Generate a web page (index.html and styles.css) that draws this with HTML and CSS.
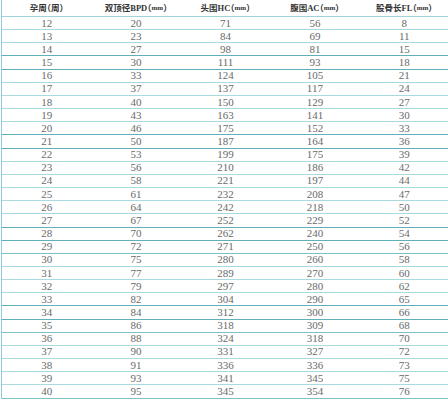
FILE: index.html
```html
<!DOCTYPE html>
<html>
<head>
<meta charset="utf-8">
<link rel="stylesheet" href="styles.css">
</head>
<body>
<div class="table">
  <div class="row head">
    <div>孕周（周）</div><div>双顶径BPD（<span class="unit">mm</span>）</div><div>头围HC（<span class="unit">mm</span>）</div><div>腹围AC（<span class="unit">mm</span>）</div><div>股骨长FL（<span class="unit">mm</span>）</div>
  </div>
  <div class="row"><div>12</div><div>20</div><div>71</div><div>56</div><div>8</div></div>
  <div class="row"><div>13</div><div>23</div><div>84</div><div>69</div><div>11</div></div>
  <div class="row dark"><div>14</div><div>27</div><div>98</div><div>81</div><div>15</div></div>
  <div class="row dark"><div>15</div><div>30</div><div>111</div><div>93</div><div>18</div></div>
  <div class="row"><div>16</div><div>33</div><div>124</div><div>105</div><div>21</div></div>
  <div class="row"><div>17</div><div>37</div><div>137</div><div>117</div><div>24</div></div>
  <div class="row"><div>18</div><div>40</div><div>150</div><div>129</div><div>27</div></div>
  <div class="row"><div>19</div><div>43</div><div>163</div><div>141</div><div>30</div></div>
  <div class="row dark"><div>20</div><div>46</div><div>175</div><div>152</div><div>33</div></div>
  <div class="row dark"><div>21</div><div>50</div><div>187</div><div>164</div><div>36</div></div>
  <div class="row"><div>22</div><div>53</div><div>199</div><div>175</div><div>39</div></div>
  <div class="row"><div>23</div><div>56</div><div>210</div><div>186</div><div>42</div></div>
  <div class="row"><div>24</div><div>58</div><div>221</div><div>197</div><div>44</div></div>
  <div class="row"><div>25</div><div>61</div><div>232</div><div>208</div><div>47</div></div>
  <div class="row"><div>26</div><div>64</div><div>242</div><div>218</div><div>50</div></div>
  <div class="row dark"><div>27</div><div>67</div><div>252</div><div>229</div><div>52</div></div>
  <div class="row dark"><div>28</div><div>70</div><div>262</div><div>240</div><div>54</div></div>
  <div class="row mid"><div>29</div><div>72</div><div>271</div><div>250</div><div>56</div></div>
  <div class="row"><div>30</div><div>75</div><div>280</div><div>260</div><div>58</div></div>
  <div class="row"><div>31</div><div>77</div><div>289</div><div>270</div><div>60</div></div>
  <div class="row"><div>32</div><div>79</div><div>297</div><div>280</div><div>62</div></div>
  <div class="row dark"><div>33</div><div>82</div><div>304</div><div>290</div><div>65</div></div>
  <div class="row dark"><div>34</div><div>84</div><div>312</div><div>300</div><div>66</div></div>
  <div class="row mid"><div>35</div><div>86</div><div>318</div><div>309</div><div>68</div></div>
  <div class="row"><div>36</div><div>88</div><div>324</div><div>318</div><div>70</div></div>
  <div class="row"><div>37</div><div>90</div><div>331</div><div>327</div><div>72</div></div>
  <div class="row"><div>38</div><div>91</div><div>336</div><div>336</div><div>73</div></div>
  <div class="row"><div>39</div><div>93</div><div>341</div><div>345</div><div>75</div></div>
  <div class="row mid"><div>40</div><div>95</div><div>345</div><div>354</div><div>76</div></div>
</div>
</body>
</html>
```
FILE: styles.css
```css
html, body {
  margin: 0;
  padding: 0;
  background: #ffffff;
}
.table {
  display: flex;
  flex-direction: column;
  margin-left: 1px;
  width: 447px;
  border-left: 1px solid #8ecdd4;
}
.row {
  display: grid;
  grid-template-columns: repeat(5, 1fr);
  height: 13.17px;
  box-sizing: border-box;
  border-bottom: 1px solid #a8dae0;
  font-family: "Liberation Serif", "Noto Sans CJK SC", serif;
  font-size: 11px;
  color: #6a6a6a;
}
.row > div {
  display: flex;
  align-items: center;
  justify-content: center;
  line-height: 1;
  white-space: nowrap;
}
.row.head {
  height: 17px;
  font-family: "Liberation Serif", "Noto Sans CJK SC", serif;
  font-feature-settings: "halt";
  font-weight: bold;
  font-size: 8.5px;
  color: #333;
  border-bottom: 1px solid #9fd3da;
}
.unit {
  font-size: 7px;
}
.row.dark {
  border-bottom: 1.5px solid #5fb0bc;
}
.row.mid {
  border-bottom: 1px solid #7cc0ca;
}
```
